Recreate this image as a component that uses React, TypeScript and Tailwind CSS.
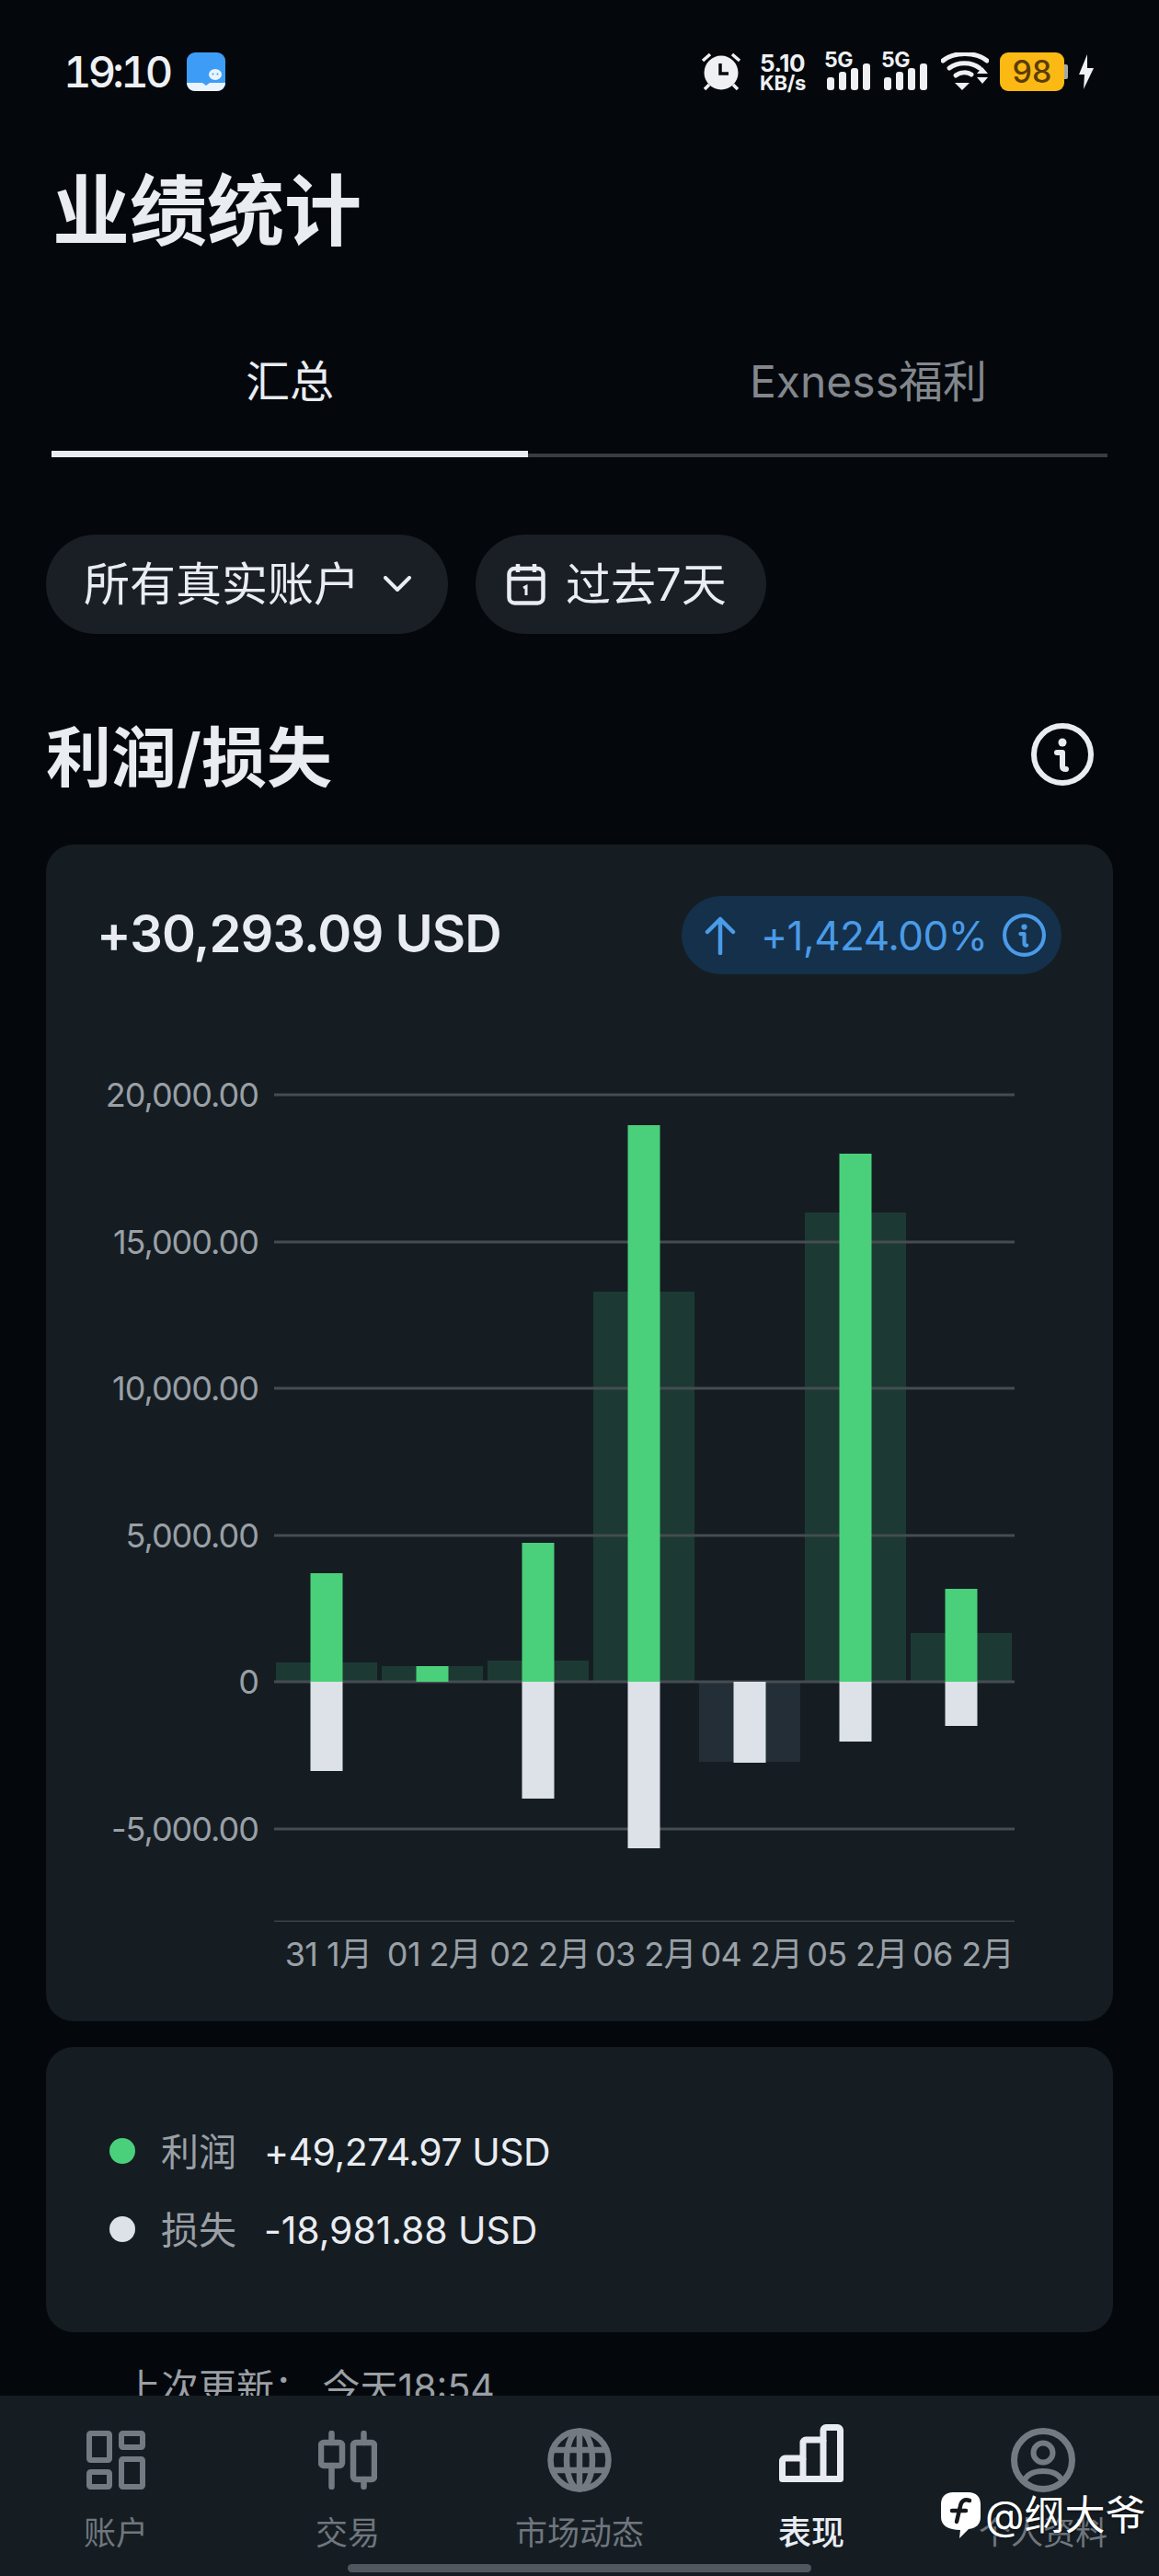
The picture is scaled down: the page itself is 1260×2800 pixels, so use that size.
const FONT = { fontFamily: 'Inter, "Noto Sans CJK SC", sans-serif' };

const gridLines = [
  { y: 1190, label: '20,000.00' },
  { y: 1350, label: '15,000.00' },
  { y: 1509, label: '10,000.00' },
  { y: 1669, label: '5,000.00' },
  { y: 1828, label: '0' },
  { y: 1988, label: '-5,000.00' },
];

const ZERO = 1828;

const days = [
  { x: 355, label: '31 1月', top: 1710, bottom: 1925, net: 1807 },
  { x: 470, label: '01 2月', top: 1811, bottom: ZERO, net: 1811 },
  { x: 585, label: '02 2月', top: 1677, bottom: 1955, net: 1805 },
  { x: 700, label: '03 2月', top: 1223, bottom: 2009, net: 1404 },
  { x: 815, label: '04 2月', top: ZERO, bottom: 1916, net: 1915 },
  { x: 930, label: '05 2月', top: 1254, bottom: 1893, net: 1318 },
  { x: 1045, label: '06 2月', top: 1727, bottom: 1876, net: 1775 },
];

const Chart = () => (
  <svg viewBox="50 1150 1161 1010" className="mt-[91px] block h-[1010px] w-[1161px]">
    {days.map((d) =>
      d.net < ZERO ? (
        <rect key={d.label} x={d.x - 55} y={d.net} width="110" height={ZERO - d.net} fill="#1C3A33" />
      ) : (
        <rect key={d.label} x={d.x - 55} y={ZERO} width="110" height={d.net - ZERO} fill="#232E36" />
      ),
    )}
    {gridLines.map((g) => (
      <g key={g.y}>
        <rect x="298" y={g.y - 1.5} width="805" height="3" fill="#454C52" />
        <text x="281" y={g.y + 13} textAnchor="end" fontSize="36" fill="#9AA0A6" letterSpacing="-1" style={FONT}>
          {g.label}
        </text>
      </g>
    ))}
    <rect x="298" y="2087.5" width="805" height="1.5" fill="#3A4248" />
    {days.map((d) => (
      <g key={d.label}>
        {d.top < ZERO && <rect x={d.x - 17.5} y={d.top} width="35" height={ZERO - d.top} fill="#4AD07B" />}
        {d.bottom > ZERO && <rect x={d.x - 17.5} y={ZERO} width="35" height={d.bottom - ZERO} fill="#DDE1E8" />}
        <text x={d.x + 2} y="2137" textAnchor="middle" fontSize="36" fill="#9AA0A6" letterSpacing="-0.6" style={FONT}>
          {d.label}
        </text>
      </g>
    ))}
  </svg>
);

const InfoIcon = ({ className, color, sw = 5 }: { className: string; color: string; sw?: number }) => (
  <svg viewBox="0 0 68 68" className={className} fill="none">
    <circle cx="34" cy="34" r={34 - sw / 2} stroke={color} strokeWidth={sw} />
    <circle cx="34" cy="21" r="4.5" fill={color} />
    <path d="M28 32h6v15c0 2 1 3 4 3" stroke={color} strokeWidth="6" strokeLinecap="round" strokeLinejoin="round" />
  </svg>
);

const SignalIcon = () => (
  <div className="relative h-[42px] w-[48px]">
    <span className="absolute top-[-1px] left-[-3px] text-[23px] leading-[18px] font-bold tracking-[-0.5px] text-[#EEF0F3]">5G</span>
    <svg viewBox="0 0 48 42" className="h-[42px] w-[48px]">
      <rect x="0" y="27" width="8" height="14" rx="3" fill="#EEF0F3" />
      <rect x="13" y="21" width="8" height="20" rx="3" fill="#EEF0F3" />
      <rect x="26" y="17" width="8" height="24" rx="3" fill="#EEF0F3" />
      <rect x="39" y="12" width="8" height="29" rx="3" fill="#EEF0F3" />
    </svg>
  </div>
);

const StatusBar = () => (
  <div className="flex h-[42px] items-center pr-[71px] pl-[69px]">
    <span className="text-[47px] leading-[42px] font-medium tracking-[-3.8px] text-[#EEF0F3] tabular-nums">19:10</span>
    <svg viewBox="0 0 42 42" className="ml-[19px] h-[42px] w-[42px]">
      <rect width="42" height="42" rx="9" fill="#3D9DF6" />
      <path d="M0 33l17 0 4 3 4-3 17 0c0 5-4 9-9 9H9c-5 0-9-4-9-9z" fill="#EAF4FD" />
      <ellipse cx="31" cy="24" rx="7" ry="6" fill="#EAF4FD" />
      <circle cx="28.5" cy="23.5" r="1" fill="#3D9DF6" />
      <circle cx="33.5" cy="23.5" r="1" fill="#3D9DF6" />
    </svg>
    <div className="ml-auto flex items-center">
      <svg viewBox="0 0 44 42" className="h-[42px] w-[44px]" fill="none">
        <circle cx="22" cy="22" r="18.5" fill="#EEF0F3" />
        <path d="M21 12v11h9" stroke="#05090D" strokeWidth="3.5" />
        <path d="M2 9l8-7M42 9l-8-7M4 40l5-5M40 40l-5-5" stroke="#EEF0F3" strokeWidth="3.5" />
      </svg>
      <div className="ml-[20px] flex w-[50px] flex-col text-[#EEF0F3]">
        <span className="text-[26px] leading-[23px] font-bold tracking-[-0.5px]">5.10</span>
        <span className="text-[22px] leading-[20px] font-bold tracking-[-0.3px] whitespace-nowrap">KB/s</span>
      </div>
      <div className="ml-[23px]">
        <SignalIcon />
      </div>
      <div className="ml-[14px]">
        <SignalIcon />
      </div>
      <svg viewBox="0 0 52 42" className="ml-[14px] h-[42px] w-[52px]" fill="none">
        <path d="M2 9C14 -1 38 -1 50 9" stroke="#EEF0F3" strokeWidth="5" strokeLinecap="round" />
        <path d="M9 17C18 10 33 10 42 17" stroke="#EEF0F3" strokeWidth="5" strokeLinecap="round" />
        <path d="M16 25C21 21 29 21 33 24" stroke="#EEF0F3" strokeWidth="5" strokeLinecap="round" />
        <path d="M15 33h16l-8 8zM39 23l6-7 6 7zM39 27h12l-6 7z" fill="#EEF0F3" />
      </svg>
      <div className="ml-[12px] flex items-center">
        <div className="flex h-[42px] w-[70px] items-center justify-center rounded-[9px] bg-[#FDB913] text-[34px] leading-none font-medium text-[#5A3D06]">
          98
        </div>
        <div className="h-[16px] w-[4px] rounded-r-[2px] bg-[#A8A8A4]" />
      </div>
      <svg viewBox="0 0 16 38" className="ml-[12px] h-[38px] w-[16px]">
        <path d="M9 0L0 22h6l-1 16 11-23H9z" fill="#EEF0F3" />
      </svg>
    </div>
  </div>
);

const navItems = [
  {
    label: '账户',
    icon: (
      <svg viewBox="0 0 64 64" className="mt-[3px] h-[64px] w-[64px]" fill="none" stroke="#737A82" strokeWidth="6">
        <rect x="3" y="3" width="22" height="29" rx="1.5" />
        <rect x="38" y="3" width="23" height="15" rx="1.5" />
        <rect x="3" y="45" width="22" height="16" rx="1.5" />
        <rect x="38" y="31" width="23" height="30" rx="1.5" />
      </svg>
    ),
  },
  {
    label: '交易',
    icon: (
      <svg viewBox="0 0 64 64" className="mt-[3px] h-[64px] w-[64px]" fill="none" stroke="#737A82" strokeWidth="6.5" strokeLinecap="round">
        <rect x="3" y="13" width="23" height="25" rx="3" />
        <rect x="38" y="13" width="23" height="40" rx="3" />
        <path d="M14.5 3v10M14.5 38v23M49.5 3v10M49.5 53v8" />
      </svg>
    ),
  },
  {
    label: '市场动态',
    icon: (
      <svg viewBox="0 0 70 70" className="h-[70px] w-[70px]" fill="none" stroke="#737A82" strokeWidth="6.5">
        <circle cx="35" cy="35" r="31.5" />
        <ellipse cx="35" cy="35" rx="14" ry="31.5" />
        <path d="M35 3v64M5 24h60M5 46h60" />
      </svg>
    ),
  },
  {
    label: '表现',
    active: true,
    icon: (
      <svg viewBox="0 0 70 63" className="mt-[-4px] h-[63px] w-[70px]" fill="none" stroke="#E8ECF2" strokeWidth="7" strokeLinejoin="round">
        <path d="M3.5 59.5V40a3 3 0 0 1 3-3H26V20a3 3 0 0 1 3-3H48V6.500a3 3 0 0 1 3-3h12.500a3 3 0 0 1 3 3v53z" />
        <path d="M26 37v22.500M48 17v42.500" />
      </svg>
    ),
  },
  {
    label: '个人资料',
    icon: (
      <svg viewBox="0 0 70 70" className="h-[70px] w-[70px]" fill="none" stroke="#737A82" strokeWidth="7">
        <circle cx="35" cy="35" r="31.5" />
        <circle cx="35" cy="27" r="10.500" strokeWidth="6" />
        <path d="M14 59c3-9 11-12 21-12s18 3 21 12" strokeWidth="6" />
      </svg>
    ),
  },
];

const BottomNav = () => (
  <nav className="h-[196px] shrink-0 bg-[#151D23]">
    <div className="grid grid-cols-5">
      {navItems.map((item) => (
        <div key={item.label} className="flex flex-col items-center pt-[35px]">
          <div className="flex h-[70px] items-start">{item.icon}</div>
          <span
            className={
              item.active
                ? 'mt-[24px] text-[36px] leading-[40px] font-medium text-[#E8ECF2]'
                : 'mt-[24px] text-[35px] leading-[40px] text-[#6F767D]'
            }
          >
            {item.label}
          </span>
        </div>
      ))}
    </div>
    <div className="mx-auto mt-[14px] h-[9px] w-[504px] rounded-full bg-[#50575E]" />
  </nav>
);

export default function App() {
  return (
    <div className="relative flex h-[2800px] w-[1260px] flex-col overflow-hidden bg-[#04080C] pt-[57px]" style={FONT}>
      <StatusBar />
      <main className="min-h-0 flex-1 overflow-hidden">
        <h1 className="mt-[91px] ml-[57px] text-[84px] leading-[80px] font-semibold text-[#E9ECF1]">业绩统计</h1>

        <div className="mx-[56px] mt-[105px] flex h-[122px] items-stretch">
          <div className="flex w-[518px] items-start justify-center border-b-[7px] border-[#E9ECF1] pt-0">
            <span className="text-[48px] leading-[80px] text-[#E9ECF1]">汇总</span>
          </div>
          <div className="flex flex-1 items-start justify-center border-b-[4px] border-[#383D44] pl-[110px]">
            <span className="text-[48px] leading-[80px] text-[#83878D]">Exness福利</span>
          </div>
        </div>

        <div className="mt-[84px] flex gap-[30px] px-[50px]">
          <div className="flex h-[108px] w-[437px] items-center rounded-full bg-[#1A1E25] pl-[41px]">
            <span className="text-[50px] leading-none text-[#E9ECF1]">所有真实账户</span>
            <svg viewBox="0 0 30 18" className="ml-[26px] h-[18px] w-[30px]" fill="none">
              <path d="M2 2l13 13L28 2" stroke="#E9ECF1" strokeWidth="4" strokeLinecap="round" strokeLinejoin="round" />
            </svg>
          </div>
          <div className="flex h-[108px] w-[316px] items-center rounded-full bg-[#1A1E25] pl-[34px]">
            <svg viewBox="0 0 42 46" className="h-[46px] w-[42px]" fill="none" stroke="#E9ECF1" strokeWidth="4.500">
              <rect x="2.500" y="6" width="37" height="37.500" rx="6" />
              <path d="M2.500 17h37M12 1v9M30 1v9" />
              <path d="M18 27l3-1.500V35" strokeWidth="3" />
            </svg>
            <span className="ml-[22px] text-[49px] leading-none text-[#E9ECF1]">过去7天</span>
          </div>
        </div>

        <div className="mt-[97px] flex h-[68px] items-center justify-between pr-[71px] pl-[50px]">
          <h2 className="pt-[5px] text-[71px] leading-[68px] font-semibold text-[#E9ECF1]">利润/损失</h2>
          <InfoIcon className="h-[68px] w-[68px]" color="#E9ECF1" sw={6} />
        </div>

        <section className="mx-[50px] mt-[64px] h-[1279px] rounded-[30px] bg-[#151D23] pt-[56px]">
          <div className="flex h-[85px] items-center justify-between pr-[56px] pl-[55px]">
            <span className="pb-[3px] text-[56px] leading-none font-semibold tracking-[-0.9px] text-[#E9ECF1]">+30,293.09 USD</span>
            <div className="flex h-[85px] w-[413px] items-center rounded-full bg-[#15304A] pl-[25px] text-[#4A9BE8]">
              <svg viewBox="0 0 34 42" className="h-[42px] w-[34px]" fill="none">
                <path d="M17 40V3M3 17L17 3l14 14" stroke="#4A9BE8" strokeWidth="4.500" strokeLinecap="round" strokeLinejoin="round" />
              </svg>
              <span className="ml-[27px] text-[44px] leading-none tracking-[-0.5px]">+1,424.00%</span>
              <InfoIcon className="ml-[17px] h-[47px] w-[47px]" color="#4A9BE8" sw={6} />
            </div>
          </div>
          <Chart />
        </section>

        <section className="mx-[50px] mt-[28px] flex h-[310px] flex-col justify-center gap-[35px] rounded-[30px] bg-[#151D23] pl-[69px]">
          <div className="flex h-[50px] items-center">
            <span className="h-[28px] w-[28px] rounded-full bg-[#4AD07B]" />
            <span className="ml-[28px] w-[112px] pt-[3px] text-[41px] leading-none text-[#9A9FA5]">利润</span>
            <span className="pt-[3px] text-[41px] leading-none tracking-[-0.5px] text-[#E9ECF1]">+49,274.97 USD</span>
          </div>
          <div className="flex h-[50px] items-center">
            <span className="h-[28px] w-[28px] rounded-full bg-[#DDE1E8]" />
            <span className="ml-[28px] w-[112px] pt-[3px] text-[41px] leading-none text-[#9A9FA5]">损失</span>
            <span className="pt-[3px] text-[41px] leading-none tracking-[-0.1px] text-[#E9ECF1]">-18,981.88 USD</span>
          </div>
        </section>

        <p className="mt-[35px] pl-[134px] text-[41px] leading-[50px] text-[#9A9FA5]">上次更新： 今天18:54</p>
      </main>
      <BottomNav />

      {/* watermark over the nav */}
      <div className="absolute top-[2709px] left-[1023px] flex items-center whitespace-nowrap" style={{ textShadow: '0 1px 3px rgba(0,0,0,0.6)' }}>
        <svg viewBox="0 0 43 50" className="h-[50px] w-[43px]">
          <path d="M13 0h17c8 0 13 5 13 13v14c0 8-5 12-13 13l-10 10 1-9C8 41 0 36 0 27V13C0 5 5 0 13 0z" fill="#FFFFFF" />
          <path d="M31 9c-6-2-9 1-10 6l-4 17M12 20h15" stroke="#15191D" strokeWidth="4.500" fill="none" strokeLinecap="round" />
        </svg>
        <span className="ml-[5px] text-[44px] leading-[48px] text-white">@纲大爷</span>
      </div>
    </div>
  );
}
